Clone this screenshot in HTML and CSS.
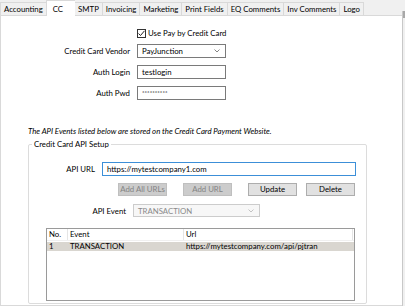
FILE: index.html
```html
<!DOCTYPE html>
<html>
<head>
<meta charset="utf-8">
<link rel="stylesheet" href="styles.css">
</head>
<body>
<div class="window">
  <div class="tabs">
    <div class="tab">Accounting</div>
    <div class="tab active">CC</div>
    <div class="tab">SMTP</div>
    <div class="tab">Invoicing</div>
    <div class="tab">Marketing</div>
    <div class="tab">Print Fields</div>
    <div class="tab">EQ Comments</div>
    <div class="tab">Inv Comments</div>
    <div class="tab last">Logo</div>
  </div>
  <div class="body">
    <div class="panel">
      <div class="form">
        <div class="check-row">
          <span class="checkbox"><svg width="9" height="9" viewBox="0 0 9 9"><polyline points="1.5,4.5 3.5,6.5 7.5,1.8" fill="none" stroke="#222" stroke-width="1"/></svg></span>
          <span>Use Pay by Credit Card</span>
        </div>
        <div class="row"><span class="label">Credit Card Vendor</span><div class="select">PayJunction<svg class="chev" width="6" height="4" viewBox="0 0 6 4"><polyline points="0.5,0.5 3,3 5.5,0.5" fill="none" stroke="#666" stroke-width="0.8"/></svg></div></div>
        <div class="row"><span class="label">Auth Login</span><div class="input">testlogin</div></div>
        <div class="row"><span class="label">Auth Pwd</span><div class="input pwd">**********</div></div>
      </div>
      <p class="note">The API Events listed below are stored on the Credit Card Payment Website.</p>
      <div class="group">
        <div class="group-title">Credit Card API Setup</div>
        <div class="url-row"><span class="label url-label">API URL</span><div class="input focus">https://mytestcompany1.com</div></div>
        <div class="btn-row">
          <div class="btn disabled">Add All URLs</div>
          <div class="btn disabled gap16">Add URL</div>
          <div class="btn gap16">Update</div>
          <div class="btn gap9">Delete</div>
        </div>
        <div class="event-row"><span class="label event-label">API Event</span><div class="select disabled-select">TRANSACTION<svg class="chev" width="6" height="4" viewBox="0 0 6 4"><polyline points="0.5,0.5 3,3 5.5,0.5" fill="none" stroke="#b5b5b5" stroke-width="0.8"/></svg></div></div>
        <div class="list">
          <div class="list-head">
            <div class="col c1">No.</div>
            <div class="col c2">Event</div>
            <div class="col c3">Url</div>
          </div>
          <div class="list-row selected">
            <div class="col c1">1</div>
            <div class="col c2">TRANSACTION</div>
            <div class="col c3">https://mytestcompany.com/api/pjtran</div>
          </div>
        </div>
      </div>
    </div>
    <div class="scrollbar"><div class="thumb"></div></div>
  </div>
</div>
</body>
</html>
```
FILE: styles.css
```css
html, body {
  margin: 0;
  padding: 0;
}
body {
  width: 405px;
  height: 306px;
  overflow: hidden;
  background: #f0f0f0;
  font-family: Lato, "Liberation Sans", sans-serif;
  font-size: 7.8px;
  color: #000;
}
.window {
  display: flex;
  flex-direction: column;
  height: 306px;
}
.tabs {
  display: flex;
  align-items: flex-end;
  height: 15px;
  position: relative;
  z-index: 2;
}
.tab {
  box-sizing: border-box;
  height: 13px;
  line-height: 12px;
  padding: 0 3px;
  border: 1px solid #d9d9d9;
  border-bottom: none;
  border-right: none;
  background: #f0f0f0;
  white-space: nowrap;
}
.tab.last {
  border-right: 1px solid #d9d9d9;
}
.tab.active {
  height: 16px;
  margin-bottom: -1px;
  padding: 2px 12px 0 6px;
  background: #fff;
}
.tab.active + .tab {
  border-left: none;
}
.body {
  display: flex;
  flex: 1;
}
.panel {
  box-sizing: border-box;
  width: 402px;
  background: #fff;
  border: 1px solid #d9d9d9;
  border-right: none;
}
.scrollbar {
  flex: 1;
  border-left: 1px solid #c8c8c8;
  background: #f0f0f0;
  margin-top: -4px;
}
.thumb {
  height: 7px;
  background: #a8a8a8;
}
.form {
  display: flex;
  flex-direction: column;
  padding-top: 12px;
}
.check-row {
  display: flex;
  align-items: center;
  gap: 2px;
  margin-left: 136px;
  height: 10px;
}
.checkbox {
  box-sizing: border-box;
  width: 9px;
  height: 9px;
  border: 1px solid #333;
  display: flex;
}
.checkbox svg {
  margin: -1px;
}
.row {
  display: flex;
  align-items: center;
  margin-top: 6px;
  height: 14px;
}
.row + .row {
  margin-top: 7px;
}
.label {
  text-align: right;
  padding-right: 7px;
  box-sizing: border-box;
  width: 136px;
}
.input, .select {
  box-sizing: border-box;
  height: 14px;
  width: 89px;
  border: 1px solid #7a7a7a;
  padding: 0 4px;
  line-height: 12px;
  white-space: nowrap;
  overflow: hidden;
}
.select {
  display: flex;
  align-items: center;
  justify-content: space-between;
}
.chev {
  margin-right: 1px;
}
.pwd {
  font-size: 6px;
  line-height: 11px;
}
.note {
  margin: 26px 0 0 27px;
  font-style: italic;
  line-height: 10px;
}
.group {
  position: relative;
  box-sizing: border-box;
  margin: 8px 0 0 27px;
  width: 339px;
  height: 160px;
  border: 1px solid #dcdcdc;
  border-radius: 2px;
  padding-top: 17px;
}
.group-title {
  position: absolute;
  top: -6px;
  left: 3px;
  padding: 0 2px;
  background: #fff;
  line-height: 10px;
}
.url-row, .event-row {
  display: flex;
  align-items: center;
}
.url-label {
  width: 73px;
}
.url-row .input {
  width: 254px;
  border-color: #3c8fd8;
}
.btn-row {
  display: flex;
  margin-top: 7px;
  padding-left: 89px;
}
.btn {
  box-sizing: border-box;
  width: 49px;
  height: 13px;
  line-height: 11px;
  text-align: center;
  background: #e1e1e1;
  border: 1px solid #adadad;
}
.btn.disabled {
  background: #cccccc;
  border-color: #bfbfbf;
  color: #838383;
}
.gap16 {
  margin-left: 16px;
}
.gap9 {
  margin-left: 9px;
}
.event-row {
  margin-top: 8px;
}
.event-label {
  width: 104px;
}
.disabled-select {
  width: 127px;
  height: 13px;
  background: #f7f7f7;
  border-color: #cccccc;
  color: #8a8a8a;
}
.list {
  box-sizing: border-box;
  margin: 11px 0 0 17px;
  width: 309px;
  height: 73px;
  border: 1px solid #9a9a9a;
}
.list-head, .list-row {
  display: flex;
  height: 11px;
  line-height: 11px;
}
.list-head {
  border-bottom: 1px solid #f0f0f0;
}
.list-row.selected {
  background: #d9d6d0;
  height: 9px;
  line-height: 9px;
  margin-top: 1px;
}
.col {
  box-sizing: border-box;
  padding-left: 2px;
  white-space: nowrap;
}
.list-head .col {
  border-right: 1px solid #e5e5e5;
}
.list-head .col.c3 {
  width: 169px;
}
.c1 { width: 21px; }
.c2 { width: 116px; }
.c3 { flex: 0 0 auto; }
```
